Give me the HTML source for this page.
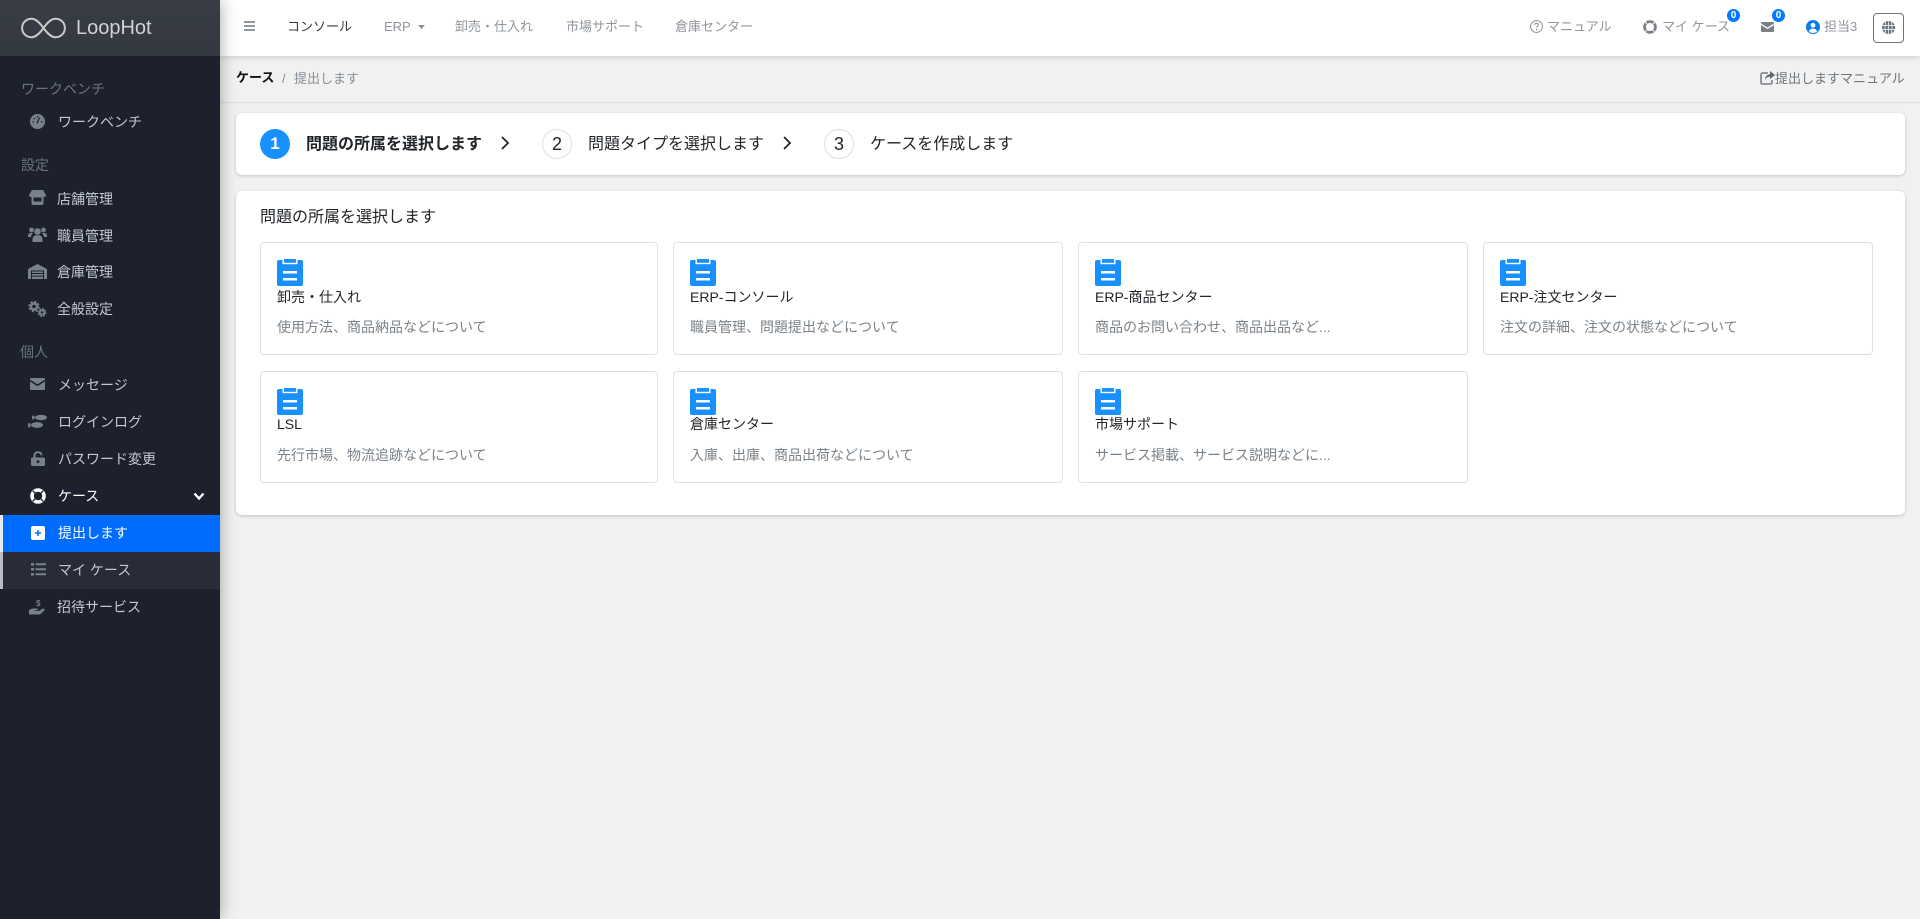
<!DOCTYPE html>
<html lang="ja"><head><meta charset="utf-8"><title>LoopHot</title>
<style>
*{box-sizing:border-box}
html,body{margin:0;padding:0;width:1920px;height:919px;overflow:hidden;background:#f1f1f1;font-family:"Liberation Sans","Noto Sans CJK JP",sans-serif;font-size:14px;color:#212529}
.t{position:absolute;white-space:nowrap;line-height:20px;height:20px}
svg{position:absolute;display:block}
#side{position:absolute;left:0;top:0;width:220px;height:919px;background:#1c212d;box-shadow:0 0 16px rgba(0,0,0,.35);z-index:3}
#brand{position:absolute;left:0;top:0;width:220px;height:56px;background:linear-gradient(#383d45,#343941)}
#top{position:absolute;left:220px;top:0;width:1700px;height:56px;background:#fff;box-shadow:0 1px 6px rgba(0,0,0,.16);z-index:2}
.h{color:#6d737b;left:21px;font-size:14px}
.i{color:#c2c7d0;left:58px}
.n{font-size:13px;color:#8f959b}
.g{fill:#7a8088}
.panel{position:absolute;background:#fff;border-radius:6px;box-shadow:0 1px 3px rgba(0,0,0,.2);left:236px;width:1669px}
.card{position:absolute;background:#fff;border:1px solid #dfe0e6;border-radius:4px}
.ct{color:#212529;font-size:14px}
.cd{color:#7a8289;font-size:14px}
.badge{position:absolute;width:13px;height:13px;border-radius:50%;background:#007bff;color:#fff;font-size:10px;font-weight:700;line-height:13px;text-align:center;top:9px}
.cir{position:absolute;width:30px;height:30px;border-radius:50%;top:129px;text-align:center;line-height:29px;font-size:18px}
</style></head><body>

<div id="top"></div>
<div style="position:absolute;left:220px;top:102px;width:1700px;height:1px;background:#dee0e6"></div>

<div id="side">
<div id="brand"></div>
<svg style="left:21px;top:17px" width="45" height="22" viewBox="0 0 45 22"><path d="M22.500 11C18 4.800 14.500 1.800 10.500 1.800 5.200 1.800 1.100 5.800 1.100 11s4.100 9.200 9.400 9.200c4 0 7.500-3 12-9.200 4.500-6.200 8-9.200 12-9.200 5.300 0 9.400 4 9.400 9.200s-4.100 9.200-9.400 9.200c-4 0-7.500-3-12-9.200z" fill="none" stroke="#c9c9c9" stroke-width="2"/></svg>
<span class="t" style="left:76px;top:18px;font-size:20px;color:#cfd2d6">LoopHot</span>

<span class="t h" style="top:79px">ワークベンチ</span>
<svg style="left:30px;top:114px" width="15" height="15" viewBox="0 0 15 15"><circle class="g" cx="7.500" cy="7.500" r="7.500"/><path d="M7 9.500l2.500-6M2.500 8H4M4 4l1 1M7.500 2v1.500M11 8h1.500" stroke="#1c212d" stroke-width="1.300" fill="none"/></svg>
<span class="t i" style="top:112px">ワークベンチ</span>

<span class="t h" style="top:155px">設定</span>
<svg style="left:29px;top:190px" width="17" height="15" viewBox="0 0 17 15"><path class="g" d="M3 0h11l3 5c0 1.200-1 2-2 2h-.5v6.500a1.500 1.500 0 0 1-1.500 1.500H4a1.500 1.500 0 0 1-1.500-1.500V7H2C1 7 0 6.200 0 5z"/><rect x="4.500" y="7.500" width="8" height="4" fill="#1c212d"/></svg>
<span class="t i" style="top:189px;left:57px">店舗管理</span>
<svg style="left:28px;top:227px" width="19" height="15" viewBox="0 0 19 15"><circle class="g" cx="3.500" cy="3" r="2.400"/><circle class="g" cx="15.500" cy="3" r="2.400"/><circle class="g" cx="9.500" cy="4.500" r="3.300"/><path class="g" d="M0 9c0-2 1-3 3-3l2 .3C3.800 7.300 3.200 8.500 3 10H0zM19 9c0-2-1-3-3-3l-2 .3c1.200 1 1.800 2.200 2 3.700h3zM4.500 13c0-3 1.500-4.700 3-4.700h4c1.500 0 3 1.700 3 4.700v2h-10z"/></svg>
<span class="t i" style="top:226px;left:57px">職員管理</span>
<svg style="left:28px;top:264px" width="19" height="15" viewBox="0 0 19 15"><path class="g" d="M0 5l9.500-5L19 5v10h-3V6.500H3V15H0z"/><path class="g" d="M4 7.500h11V9H4zM4 10h11v1.600H4zM4 12.600h11V15H4z"/></svg>
<span class="t i" style="top:262px;left:57px">倉庫管理</span>
<svg style="left:28px;top:301px" width="19" height="16" viewBox="0 0 19 16"><circle cx="6" cy="5.500" r="3" fill="none" stroke="#7a8088" stroke-width="2.400"/><circle cx="6" cy="5.500" r="4.800" fill="none" stroke="#7a8088" stroke-width="1.800" stroke-dasharray="2.200 1.570"/><circle cx="14" cy="11.500" r="2.200" fill="none" stroke="#7a8088" stroke-width="2"/><circle cx="14" cy="11.500" r="3.800" fill="none" stroke="#7a8088" stroke-width="1.500" stroke-dasharray="1.800 1.180"/></svg>
<span class="t i" style="top:299px;left:57px">全般設定</span>

<span class="t h" style="top:342px;left:20px">個人</span>
<svg style="left:30px;top:378px" width="15" height="12" viewBox="0 0 15 12"><path class="g" d="M1 0h13c.6 0 1 .4 1 1v.6L7.500 6.400 0 1.600V1c0-.6.4-1 1-1zM0 3.400l7.500 4.800L15 3.400V11c0 .6-.4 1-1 1H1c-.6 0-1-.4-1-1z"/></svg>
<span class="t i" style="top:375px">メッセージ</span>
<svg style="left:28px;top:414px" width="19" height="15" viewBox="0 0 19 15"><ellipse class="g" cx="13" cy="3.500" rx="6" ry="2.700"/><rect class="g" x="4" y="1.500" width="2.500" height="4" rx="1.200"/><ellipse class="g" cx="9" cy="11" rx="6" ry="2.900"/><rect class="g" x="0" y="9" width="2.500" height="4.500" rx="1.200"/></svg>
<span class="t i" style="top:412px">ログインログ</span>
<svg style="left:31px;top:451px" width="14" height="15" viewBox="0 0 14 15"><path d="M3.500 7V4.200C3.500 2.400 5 1.200 7 1.200s3.500 1.300 3.500 3" fill="none" stroke="#7a8088" stroke-width="2"/><rect class="g" y="6.500" width="14" height="8.500" rx="1.500"/><circle cx="7" cy="10.700" r="1.400" fill="#1c212d"/></svg>
<span class="t i" style="top:449px">パスワード変更</span>
<svg style="left:30px;top:488px" width="16" height="16" viewBox="0 0 16 16"><circle cx="8" cy="8" r="6" fill="none" stroke="#fff" stroke-width="3.600"/><path d="M2.700 2.700l2.800 2.800M13.300 2.700l-2.800 2.800M2.700 13.300l2.800-2.800M13.300 13.300l-2.800-2.800" stroke="#1c212d" stroke-width="1.300"/></svg>
<span class="t" style="top:486px;left:58px;color:#fff">ケース</span>
<svg style="left:193px;top:492px" width="12" height="9" viewBox="0 0 12 9"><path d="M1.500 1.500L6 6.500l4.500-5" fill="none" stroke="#fff" stroke-width="2.400"/></svg>

<div style="position:absolute;left:0;top:515px;width:220px;height:37px;background:#006cff;border-left:3px solid #e5e8ee"></div>
<svg style="left:31px;top:526px" width="14" height="14" viewBox="0 0 14 14"><rect width="14" height="14" rx="2" fill="#fff"/><path d="M7 4v6M4 7h6" stroke="#006cff" stroke-width="1.500"/></svg>
<span class="t" style="top:523px;left:58px;color:#fff">提出します</span>

<div style="position:absolute;left:0;top:552px;width:220px;height:37px;background:#272c38;border-left:3px solid #b9bcc2"></div>
<svg style="left:31px;top:563px" width="15" height="13" viewBox="0 0 15 13"><path class="g" d="M0 0h3v2.600H0zM4.500.3H15v2H4.500zM0 5h3v2.600H0zM4.500 5.300H15v2H4.500zM0 10h3v2.600H0zM4.500 10.300H15v2H4.500z"/></svg>
<span class="t i" style="top:560px">マイ ケース</span>

<svg style="left:29px;top:599px" width="17" height="16" viewBox="0 0 17 16"><path class="g" d="M0 11.500c1.500-1.700 3-2.200 4.500-2H8c1 0 1.300 1.700 0 1.800H5.800v.7H10l3.500-2.200c1.500-.8 2.800.6 1.700 1.800L11.500 15c-.3.300-.7.500-1.200.5H0z"/><text x="7" y="7" font-size="8" font-weight="700" fill="#7a8088" font-family="Liberation Sans">$</text></svg>
<span class="t i" style="top:597px;left:57px">招待サービス</span>
</div>

<div style="position:absolute;left:0;top:0;z-index:4">
<svg style="left:244px;top:21px" width="11" height="10" viewBox="0 0 11 10"><path d="M0 1h11M0 5h11M0 9h11" stroke="#6c757d" stroke-width="1.400"/></svg>
<span class="t n" style="left:287px;top:17px;color:#343a40">コンソール</span>
<span class="t n" style="left:384px;top:17px">ERP</span>
<svg style="left:418px;top:25px" width="7" height="4" viewBox="0 0 7 4"><path d="M0 0h7L3.500 4z" fill="#868e96"/></svg>
<span class="t n" style="left:455px;top:17px">卸売・仕入れ</span>
<span class="t n" style="left:566px;top:17px">市場サポート</span>
<span class="t n" style="left:675px;top:17px">倉庫センター</span>

<svg style="left:1530px;top:20px" width="13" height="13" viewBox="0 0 13 13"><circle cx="6.500" cy="6.500" r="5.900" fill="none" stroke="#868e96" stroke-width="1"/><path d="M4.700 5c0-1.200.9-1.800 1.900-1.800s1.800.7 1.800 1.600c0 1.300-1.800 1.300-1.800 2.700" fill="none" stroke="#868e96" stroke-width="1"/><circle cx="6.600" cy="9.500" r=".7" fill="#868e96"/></svg>
<span class="t n" style="left:1547px;top:17px">マニュアル</span>
<svg style="left:1643px;top:20px" width="14" height="14" viewBox="0 0 14 14"><circle cx="7" cy="7" r="5.400" fill="none" stroke="#7a8088" stroke-width="2.800"/><path d="M2.400 2.400l2.800 2.800M11.600 2.400L8.800 5.200M2.400 11.600l2.800-2.800M11.600 11.600L8.800 8.800" stroke="#fff" stroke-width="1"/></svg>
<span class="t n" style="left:1662px;top:17px">マイ ケース</span>
<span class="badge" style="left:1727px">0</span>
<svg style="left:1761px;top:22px" width="13" height="10" viewBox="0 0 13 10"><path d="M1 0h11c.6 0 1 .4 1 1v.5L6.500 5.500 0 1.500V1c0-.6.4-1 1-1zM0 3l6.500 4L13 3v6c0 .6-.4 1-1 1H1c-.6 0-1-.4-1-1z" fill="#7a8088"/></svg>
<span class="badge" style="left:1772px">0</span>
<svg style="left:1806px;top:20px" width="14" height="14" viewBox="0 0 14 14"><circle cx="7" cy="7" r="7" fill="#0a7bf0"/><circle cx="7" cy="5.300" r="2.400" fill="#fff"/><path d="M2.800 11.300C3.400 9.500 5 8.600 7 8.600s3.600.9 4.200 2.700C10 12.500 8.600 13 7 13s-3-.5-4.200-1.700z" fill="#fff"/></svg>
<span class="t n" style="left:1824px;top:17px">担当3</span>
<div style="position:absolute;left:1873px;top:13px;width:31px;height:30px;border:1px solid #6c757d;border-radius:4px"></div>
<svg style="left:1882px;top:21px" width="13" height="13" viewBox="0 0 13 13"><circle cx="6.500" cy="6.500" r="6.500" fill="#6c757d"/><path d="M0 4.500h13M0 8.500h13M6.500 0v13M3.700 1C2.800 4.500 2.800 8.500 3.700 12M9.300 1c.9 3.500.9 7.500 0 11" stroke="#fff" stroke-width=".7" fill="none"/></svg>
</div>

<span class="t" style="left:236px;top:68px;font-size:13px;color:#111;font-weight:700">ケース</span>
<span class="t" style="left:282px;top:69px;font-size:13px;color:#868e96">/</span>
<span class="t" style="left:294px;top:69px;font-size:13px;color:#868e96">提出します</span>
<svg style="left:1760px;top:71px" width="15" height="14" viewBox="0 0 15 14"><path d="M8 2H2.500C1.700 2 1 2.700 1 3.500v8c0 .8.700 1.500 1.500 1.500h8c.8 0 1.500-.7 1.500-1.500V9" fill="none" stroke="#7a8088" stroke-width="1.600"/><path d="M10 0l5 4-5 4V5.700C7.500 5.700 6 6.700 5 9c0-3.300 2-5.400 5-5.700z" fill="#5f666d"/></svg>
<span class="t" style="left:1775px;top:69px;font-size:13px;color:#6c757d">提出しますマニュアル</span>

<div class="panel" style="top:113px;height:62px"></div>
<div class="cir" style="left:260px;background:#1890ff;color:#fff;font-weight:700;font-size:17px">1</div>
<span class="t" style="left:306px;top:134px;font-size:16px;font-weight:700;color:#212529;height:22px;line-height:22px">問題の所属を選択します</span>
<svg style="left:500px;top:135px" width="10" height="16" viewBox="0 0 10 16"><path d="M2 2l6 6-6 6" fill="none" stroke="#212529" stroke-width="1.800"/></svg>
<div class="cir" style="left:542px;border:1px solid #dcdfe3;color:#212529">2</div>
<span class="t" style="left:588px;top:134px;font-size:16px;color:#212529;height:22px;line-height:22px">問題タイプを選択します</span>
<svg style="left:782px;top:135px" width="10" height="16" viewBox="0 0 10 16"><path d="M2 2l6 6-6 6" fill="none" stroke="#212529" stroke-width="1.800"/></svg>
<div class="cir" style="left:824px;border:1px solid #dcdfe3;color:#212529">3</div>
<span class="t" style="left:870px;top:134px;font-size:16px;color:#212529;height:22px;line-height:22px">ケースを作成します</span>

<div class="panel" style="top:191px;height:324px"></div>
<span class="t" style="left:260px;top:207px;font-size:16px;color:#212529;height:22px;line-height:22px">問題の所属を選択します</span>

<div class="card" style="left:260px;top:242px;width:398px;height:113px"></div>
<div class="card" style="left:673px;top:242px;width:390px;height:113px"></div>
<div class="card" style="left:1078px;top:242px;width:390px;height:113px"></div>
<div class="card" style="left:1483px;top:242px;width:390px;height:113px"></div>
<div class="card" style="left:260px;top:371px;width:398px;height:112px"></div>
<div class="card" style="left:673px;top:371px;width:390px;height:112px"></div>
<div class="card" style="left:1078px;top:371px;width:390px;height:112px"></div>

<svg width="0" height="0" style="position:absolute"><defs><g id="clip"><path d="M2 1h22a2 2 0 0 1 2 2v22a2 2 0 0 1-2 2H2a2 2 0 0 1-2-2V3a2 2 0 0 1 2-2z" fill="#1890ff"/><rect x="5.500" y="0" width="15" height="5.200" fill="#fff"/><rect x="7" y="0" width="12" height="3.800" fill="#1890ff"/><rect x="6" y="12" width="14" height="2.500" fill="#fff"/><rect x="6" y="19" width="14" height="2.500" fill="#fff"/></g></defs></svg>

<svg style="left:277px;top:259px" width="26" height="27" viewBox="0 0 26 27"><use href="#clip"/></svg>
<svg style="left:690px;top:259px" width="26" height="27" viewBox="0 0 26 27"><use href="#clip"/></svg>
<svg style="left:1095px;top:259px" width="26" height="27" viewBox="0 0 26 27"><use href="#clip"/></svg>
<svg style="left:1500px;top:259px" width="26" height="27" viewBox="0 0 26 27"><use href="#clip"/></svg>
<svg style="left:277px;top:388px" width="26" height="27" viewBox="0 0 26 27"><use href="#clip"/></svg>
<svg style="left:690px;top:388px" width="26" height="27" viewBox="0 0 26 27"><use href="#clip"/></svg>
<svg style="left:1095px;top:388px" width="26" height="27" viewBox="0 0 26 27"><use href="#clip"/></svg>

<span class="t ct" style="left:277px;top:287px">卸売・仕入れ</span>
<span class="t cd" style="left:277px;top:317px">使用方法、商品納品などについて</span>
<span class="t ct" style="left:690px;top:287px">ERP-コンソール</span>
<span class="t cd" style="left:690px;top:317px">職員管理、問題提出などについて</span>
<span class="t ct" style="left:1095px;top:287px">ERP-商品センター</span>
<span class="t cd" style="left:1095px;top:317px">商品のお問い合わせ、商品出品など...</span>
<span class="t ct" style="left:1500px;top:287px">ERP-注文センター</span>
<span class="t cd" style="left:1500px;top:317px">注文の詳細、注文の状態などについて</span>
<span class="t ct" style="left:277px;top:414px">LSL</span>
<span class="t cd" style="left:277px;top:445px">先行市場、物流追跡などについて</span>
<span class="t ct" style="left:690px;top:414px">倉庫センター</span>
<span class="t cd" style="left:690px;top:445px">入庫、出庫、商品出荷などについて</span>
<span class="t ct" style="left:1095px;top:414px">市場サポート</span>
<span class="t cd" style="left:1095px;top:445px">サービス掲載、サービス説明などに...</span>

</body></html>
